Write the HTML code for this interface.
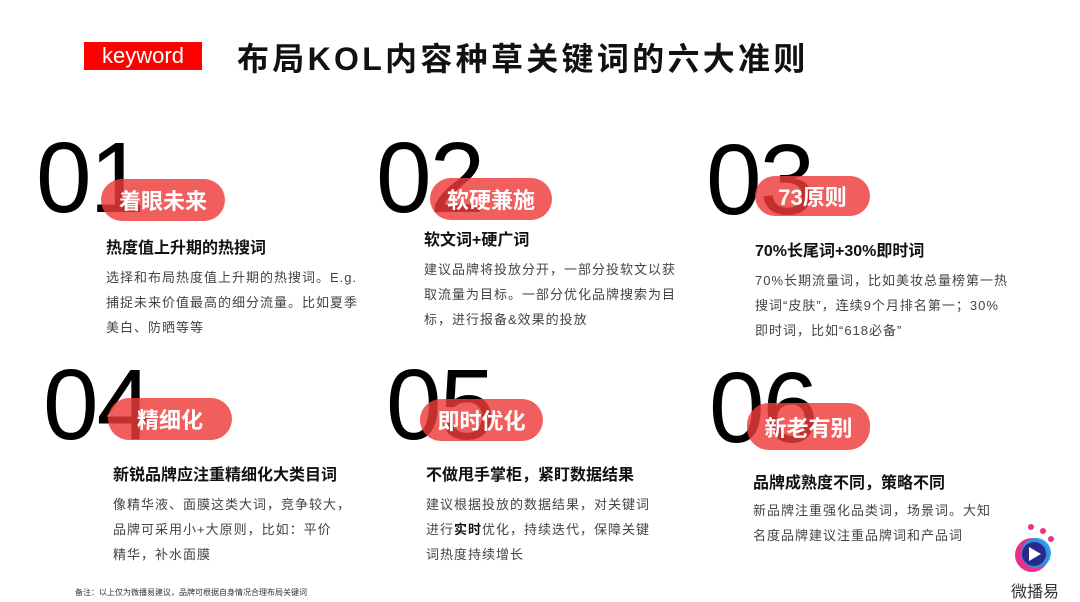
<!DOCTYPE html>
<html><head><meta charset="utf-8"><style>
*{margin:0;padding:0;box-sizing:border-box}
body{width:1080px;height:602px;background:#fff;position:relative;overflow:hidden;font-family:"Liberation Sans","Noto Sans CJK SC",sans-serif;color:#111}
.a{position:absolute;white-space:nowrap}
.num{font-size:100px;line-height:1;color:#000;font-weight:normal;letter-spacing:-2px}
.pill{background:rgba(238,58,58,0.82);color:#fff;font-weight:bold;font-size:22px;border-radius:22px;display:flex;align-items:center;justify-content:center}
.h{font-weight:bold;font-size:16px;color:#111}
.b{font-size:13px;color:#444;line-height:25px;letter-spacing:1px}
</style></head><body>
<div class="a" style="left:84px;top:42px;width:118px;height:28px;background:#f00;color:#fff;font-size:22px;text-align:center;line-height:28px">keyword</div>
<div class="a" style="left:237px;top:37px;font-size:32px;font-weight:bold;letter-spacing:3.3px;line-height:44px">布局KOL内容种草关键词的六大准则</div>

<div class="a num" style="left:36px;top:128px">01</div>
<div class="a pill" style="left:101px;top:179px;width:124px;height:42px">着眼未来</div>
<div class="a h" style="left:106px;top:234px">热度值上升期的热搜词</div>
<div class="a b" style="left:106px;top:265px">选择和布局热度值上升期的热搜词。E.g.<br>捕捉未来价值最高的细分流量。比如夏季<br>美白、防晒等等</div>

<div class="a num" style="left:376px;top:128px">02</div>
<div class="a pill" style="left:430px;top:178px;width:122px;height:42px">软硬兼施</div>
<div class="a h" style="left:424px;top:226px">软文词+硬广词</div>
<div class="a b" style="left:424px;top:257px">建议品牌将投放分开，一部分投软文以获<br>取流量为目标。一部分优化品牌搜索为目<br>标，进行报备&amp;效果的投放</div>

<div class="a num" style="left:706px;top:130px">03</div>
<div class="a pill" style="left:755px;top:176px;width:115px;height:40px">73原则</div>
<div class="a h" style="left:755px;top:237px">70%长尾词+30%即时词</div>
<div class="a b" style="left:755px;top:268px">70%长期流量词，比如美妆总量榜第一热<br>搜词“皮肤”，连续9个月排名第一；30%<br>即时词，比如“618必备”</div>

<div class="a num" style="left:43px;top:355px">04</div>
<div class="a pill" style="left:108px;top:398px;width:124px;height:42px">精细化</div>
<div class="a h" style="left:113px;top:461px">新锐品牌应注重精细化大类目词</div>
<div class="a b" style="left:113px;top:492px">像精华液、面膜这类大词，竞争较大，<br>品牌可采用小+大原则，比如：平价<br>精华，补水面膜</div>

<div class="a num" style="left:386px;top:355px">05</div>
<div class="a pill" style="left:420px;top:399px;width:123px;height:42px">即时优化</div>
<div class="a h" style="left:426px;top:461px">不做甩手掌柜，紧盯数据结果</div>
<div class="a b" style="left:426px;top:492px">建议根据投放的数据结果，对关键词<br>进行<b style="color:#111">实时</b>优化，持续迭代，保障关键<br>词热度持续增长</div>

<div class="a num" style="left:709px;top:358px">06</div>
<div class="a pill" style="left:747px;top:403px;width:123px;height:47px">新老有别</div>
<div class="a h" style="left:753px;top:469px">品牌成熟度不同，策略不同</div>
<div class="a b" style="left:753px;top:498px">新品牌注重强化品类词，场景词。大知<br>名度品牌建议注重品牌词和产品词</div>

<div class="a" style="left:75px;top:587px;font-size:8px;color:#333">备注：以上仅为微播易建议，品牌可根据自身情况合理布局关键词</div>

<svg class="a" style="left:1010px;top:523px" width="56" height="55" viewBox="0 0 56 55">
<circle cx="21" cy="4" r="3" fill="#f0308a"/><circle cx="33" cy="8" r="3" fill="#f0308a"/><circle cx="41" cy="16" r="3" fill="#f0308a"/>
<circle cx="22" cy="32" r="17" fill="#e8308a"/>
<circle cx="26" cy="30" r="15" fill="#1d9be8" opacity=".9"/>
<circle cx="24" cy="31" r="12" fill="#2a2a8a"/>
<path d="M19 24 L31 31 L19 38 Z" fill="#fff"/>
</svg>
<div class="a" style="left:1011px;top:578px;font-size:16px;color:#333">微播易</div>
</body></html>
